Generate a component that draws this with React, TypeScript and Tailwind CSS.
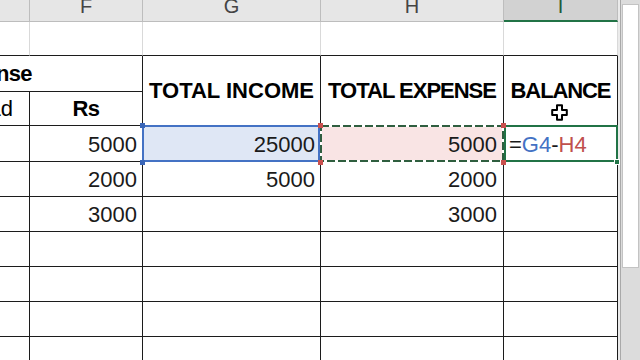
import React from "react";

const grid = "border-[#1c1c1c]";
const num = "flex items-end justify-end pr-[5px] pb-[5px] text-[22px] leading-none text-[#1a1a1a] border-r border-b " + grid;
const empty = "border-r border-b " + grid;

function ColHead({ label, active }: { label?: string; active?: boolean }) {
  return (
    <div
      className={
        active
          ? "flex items-end justify-center pb-[4px] bg-[#d2d2d2] border-r border-r-[#bdbdbd] border-b-2 border-b-[#217346] text-[20px] leading-none text-[#1f5c38]"
          : "flex items-end justify-center pb-[5px] bg-[#e6e6e6] border-r border-b border-[#bdbdbd] text-[20px] leading-none text-[#444444]"
      }
    >
      {label}
    </div>
  );
}

function Corner({ className }: { className: string }) {
  return <div className={"absolute w-[5px] h-[5px] " + className} />;
}

export default function App() {
  const rows = [
    ["2000", "5000", "2000"],
    ["3000", "", "3000"],
    ["", "", ""],
    ["", "", ""],
    ["", "", ""],
    ["", "", ""],
  ];

  return (
    <div className="flex w-[640px] h-[360px] overflow-hidden bg-white font-['Liberation_Sans',Arial,sans-serif]">
      <div className="grid grid-cols-[30px_113px_178px_183px_114px] grid-rows-[22px_34px_36px_34px_36px_35px_35px_35px_35px_35px_35px] shrink-0">
        {/* column letters */}
        <ColHead />
        <ColHead label="F" />
        <ColHead label="G" />
        <ColHead label="H" />
        <ColHead label="I" active />

        {/* empty row above the table */}
        {[0, 1, 2, 3, 4].map((i) => (
          <div key={i} className="border-r border-r-[#d9d9d9] border-b border-b-[#1c1c1c]" />
        ))}

        {/* table header */}
        <div className={"col-span-2 flex items-end justify-end pr-[110px] pb-[6px] overflow-hidden border-r border-b " + grid}>
          <span className="shrink-0 whitespace-nowrap text-[22px] leading-none font-bold tracking-[-0.6px] text-black">Expense</span>
        </div>
        <div className={"row-span-2 flex items-center justify-center border-r border-b " + grid}>
          <span className="text-[22px] leading-none font-bold text-black whitespace-nowrap">TOTAL INCOME</span>
        </div>
        <div className={"row-span-2 flex items-center justify-center border-r border-b " + grid}>
          <span className="text-[22px] leading-none font-bold tracking-[-1px] text-black whitespace-nowrap">TOTAL EXPENSE</span>
        </div>
        <div className={"row-span-2 relative flex items-center justify-center border-r border-b " + grid}>
          <span className="text-[22px] leading-none font-bold tracking-[-1.1px] text-black whitespace-nowrap">BALANCE</span>
          {/* mouse cursor */}
          <svg className="absolute left-[47px] top-[48px]" width="17" height="17" viewBox="0 0 17 17">
            <path
              d="M6 1.2h5v4.8h4.8v5h-4.8v4.8h-5v-4.8h-4.8v-5h4.8z"
              fill="#ffffff"
              stroke="#000000"
              strokeWidth="2"
              strokeLinejoin="round"
            />
          </svg>
        </div>
        <div className={"flex items-end justify-end pr-[16px] pb-[5px] overflow-hidden border-r border-b " + grid}>
          <span className="shrink-0 whitespace-nowrap text-[22px] leading-none text-black">Head</span>
        </div>
        <div className={"flex items-end justify-center pb-[5px] border-r border-b " + grid}>
          <span className="text-[22px] leading-none font-bold tracking-[-0.5px] text-black">Rs</span>
        </div>

        {/* row 4 with the formula */}
        <div className={empty} />
        <div className={num}>5000</div>
        <div className={num + " relative bg-[#dfe7f5]"}>
          25000
          <div className="absolute -left-px -top-px right-0 -bottom-px border-2 border-[#4472c4]" />
          <Corner className="-left-[3px] -top-[3px] bg-[#3a66b8]" />
          <Corner className="-left-[3px] -bottom-[4px] bg-[#3a66b8]" />
        </div>
        <div className={num + " relative bg-[#f9e4e4] pr-[6px]"}>
          5000
          <svg className="absolute -left-px -top-px z-10" width="184" height="37" viewBox="0 0 184 37">
            <rect x="1" y="1" width="182" height="35" fill="none" stroke="#ffffff" strokeWidth="2" />
            <rect x="1" y="1" width="182" height="35" fill="none" stroke="#2f5e3f" strokeWidth="2" strokeDasharray="8 3" />
          </svg>
          <Corner className="z-20 -left-[3px] -top-[3px] bg-[#c9504e]" />
          <Corner className="z-20 -left-[3px] -bottom-[4px] bg-[#c9504e]" />
          <Corner className="z-20 -right-[3px] -top-[3px] bg-[#c9504e]" />
          <Corner className="z-20 -right-[3px] -bottom-[4px] bg-[#c9504e]" />
        </div>
        <div className={"relative flex items-end pl-[5px] pb-[5px] text-[22px] leading-none text-[#1a1a1a] border-r border-b " + grid}>
          =<span className="text-[#4472c4]">G4</span>-<span className="text-[#c0504d]">H4</span>
          <div className="absolute left-0 -top-px -right-px -bottom-px border-2 border-[#217346]" />
          <div className="absolute -right-[3px] -bottom-[4px] w-[6px] h-[6px] bg-[#217346] border border-white" />
        </div>

        {rows.map((r, i) => (
          <React.Fragment key={i}>
            <div className={empty} />
            <div className={num}>{r[0]}</div>
            <div className={num}>{r[1]}</div>
            <div className={num + " pr-[6px]"}>{r[2]}</div>
            <div className={empty} />
          </React.Fragment>
        ))}
      </div>

      {/* vertical scroll bar */}
      <div className="flex flex-1">
        <div className="w-[2px] bg-[#ebebeb]" />
        <div className="w-px bg-[#a9a9a9]" />
        <div className="flex-1 bg-[#dcdcdc] px-[1px] pt-[4px]">
          <div className="h-[264px] bg-white border border-[#c3c3c3]" />
        </div>
      </div>
    </div>
  );
}
